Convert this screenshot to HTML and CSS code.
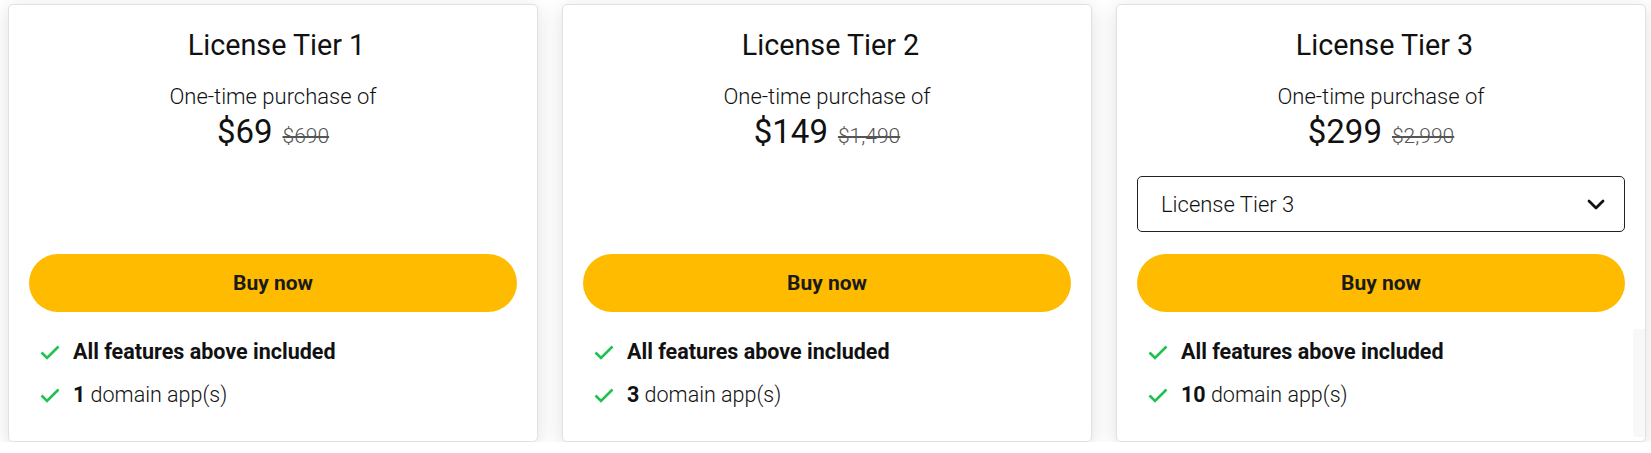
FILE: index.html
```html
<!DOCTYPE html>
<html lang="en">
<head>
<meta charset="utf-8">
<title>License Tiers</title>
<link rel="stylesheet" href="styles.css">
</head>
<body>
<div class="tiers">
  <div class="card">
    <h2 class="title">License Tier 1</h2>
    <p class="sub">One-time purchase of</p>
    <p class="price"><span class="now">$69</span><s class="old">$690</s></p>
    <div class="select-slot"></div>
    <button class="buy">Buy now</button>
    <ul class="features">
      <li><svg class="check" viewBox="0 0 20 20"><path d="M1.5 10.5 L7 16 L18.5 4.5"/></svg><b>All features above included</b></li>
      <li><svg class="check" viewBox="0 0 20 20"><path d="M1.5 10.5 L7 16 L18.5 4.5"/></svg><span><b>1</b> domain app(s)</span></li>
    </ul>
  </div>
  <div class="card">
    <h2 class="title">License Tier 2</h2>
    <p class="sub">One-time purchase of</p>
    <p class="price"><span class="now">$149</span><s class="old">$1,490</s></p>
    <div class="select-slot"></div>
    <button class="buy">Buy now</button>
    <ul class="features">
      <li><svg class="check" viewBox="0 0 20 20"><path d="M1.5 10.5 L7 16 L18.5 4.5"/></svg><b>All features above included</b></li>
      <li><svg class="check" viewBox="0 0 20 20"><path d="M1.5 10.5 L7 16 L18.5 4.5"/></svg><span><b>3</b> domain app(s)</span></li>
    </ul>
  </div>
  <div class="card">
    <h2 class="title">License Tier 3</h2>
    <p class="sub">One-time purchase of</p>
    <p class="price"><span class="now">$299</span><s class="old">$2,990</s></p>
    <div class="select-slot">
      <div class="select">
        <span>License Tier 3</span>
        <svg class="chev" viewBox="0 0 18 11"><path d="M2 2 L9 9 L16 2"/></svg>
      </div>
    </div>
    <button class="buy">Buy now</button>
    <ul class="features">
      <li><svg class="check" viewBox="0 0 20 20"><path d="M1.5 10.5 L7 16 L18.5 4.5"/></svg><b>All features above included</b></li>
      <li><svg class="check" viewBox="0 0 20 20"><path d="M1.5 10.5 L7 16 L18.5 4.5"/></svg><span><b>10</b> domain app(s)</span></li>
    </ul>
    <div class="ghost"></div>
  </div>
</div>
</body>
</html>
```

FILE: styles.css
```css
* { box-sizing: border-box; }
html, body { margin: 0; padding: 0; background: #fff; }
body {
  font-family: Roboto, "Liberation Sans", Arial, sans-serif;
  color: #111;
}
.tiers {
  display: grid;
  grid-template-columns: repeat(3, 530px);
  column-gap: 24px;
  padding: 4px 0 0 8px;
}
.card {
  position: relative;
  background: #fff;
  border: 1px solid #e1e1e4;
  border-radius: 5px;
  box-shadow: 0 4px 20px rgba(0, 0, 0, 0.13);
  padding: 22px 20px 24px;
  height: 438px;
  text-align: center;
}
.title {
  margin: 0;
  padding-left: 7px;
  font-size: 28.7px;
  line-height: 36px;
  font-weight: 400;
  color: #111;
}
.sub {
  margin: 20px 0 0;
  font-size: 22px;
  line-height: 28px;
  font-weight: 300;
  color: #111;
}
.price {
  margin: 1px 0 0;
  line-height: 40px;
  display: flex;
  justify-content: center;
  align-items: baseline;
  gap: 10px;
}
.now { font-size: 33px; font-weight: 400; color: #111; }
.old { font-size: 21px; font-weight: 300; color: #555; }
.select-slot {
  margin-top: 20px;
  height: 56px;
}
.select {
  height: 56px;
  border: 1px solid #222;
  border-radius: 5px;
  display: flex;
  align-items: center;
  justify-content: space-between;
  padding: 0 19px 0 23px;
  font-size: 22px;
  font-weight: 300;
  color: #111;
}
.chev {
  width: 18px;
  height: 11px;
  fill: none;
  stroke: #111;
  stroke-width: 2.8;
  stroke-linecap: round;
  stroke-linejoin: round;
}
.buy {
  display: block;
  width: 100%;
  margin-top: 22px;
  height: 58px;
  border: 0;
  border-radius: 29px;
  background: #ffbb00;
  font-family: inherit;
  font-size: 21px;
  font-weight: 700;
  color: #1a1a1a;
}
.features {
  list-style: none;
  margin: 18px 0 0;
  padding: 0 0 0 11px;
  text-align: left;
}
.features li {
  display: flex;
  align-items: center;
  gap: 13px;
  height: 43px;
  font-size: 21.5px;
  color: #111;
}
.features li span { font-weight: 300; }
.features li b { font-weight: 700; }
.check {
  width: 20px;
  height: 20px;
  flex: none;
  fill: none;
  stroke: #1fc24f;
  stroke-width: 2.6;
}
.ghost {
  position: absolute;
  right: 0;
  top: 324px;
  width: 12px;
  height: 108px;
  background: #f8f8f9;
  border-radius: 4px 0 0 4px;
}
```
